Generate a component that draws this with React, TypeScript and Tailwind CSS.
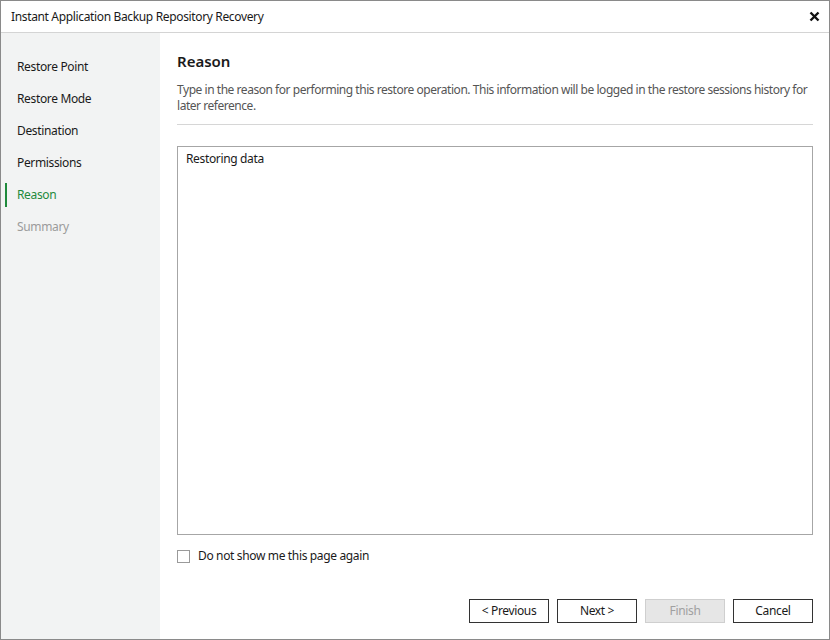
import { useState } from 'react'

const STEPS = ['Restore Point', 'Restore Mode', 'Destination', 'Permissions', 'Reason', 'Summary']

export default function App() {
  const [reason, setReason] = useState('Restoring data')
  const [hide, setHide] = useState(false)
  const active = 4

  return (
    <div className="w-[830px] h-[640px] bg-white border border-[#8a8a8a] flex flex-col text-[12px] tracking-[-0.35px] text-[#1a1a1a] overflow-hidden" style={{ fontFamily: '"Noto Sans", "Open Sans", sans-serif' }}>
      <div className="h-[32px] shrink-0 border-b border-[#d4d4d4] flex items-center justify-between pl-[10px] pr-[9px]">
        <span>Instant Application Backup Repository Recovery</span>
        <svg width="11" height="11" viewBox="0 0 11 11"><path d="M1.5 1.5l8 8M9.5 1.5l-8 8" stroke="#111" strokeWidth="2.4" /></svg>
      </div>

      <div className="flex flex-1 min-h-0">
        <div className="w-[159px] shrink-0 bg-[#f2f3f3] pt-[18px]">
          {STEPS.map((s, i) => (
            <div key={s} className="h-[32px] flex items-center relative">
              {i === active && <div className="absolute left-[4px] top-[4px] bottom-[4px] w-[2px] bg-[#1f8a3c]" />}
              <span className={`pl-[16px] ${i === active ? 'text-[#1f8a3c]' : i > active ? 'text-[#9b9b9b]' : 'text-[#1a1a1a]'}`}>{s}</span>
            </div>
          ))}
        </div>

        <div className="flex-1 flex flex-col pl-[17px] pr-[16px] pt-[17px] pb-[16px]">
          <h1 className="text-[15px] font-semibold leading-[22px] tracking-normal text-[#1a1a1a]">Reason</h1>
          <p className="mt-[10px] text-[#555] leading-[16px] tracking-[-0.46px]">Type in the reason for performing this restore operation. This information will be logged in the restore sessions history for later reference.</p>
          <div className="mt-[10px] h-px bg-[#d6d6d6]" />

          <textarea
            value={reason}
            onChange={(e) => setReason(e.target.value)}
            className="mt-[21px] h-[389px] resize-none border border-[#a6a6a6] px-[8px] py-[4px] leading-[16px] outline-none text-[#1a1a1a]"
          />

          <label className="mt-[12px] flex items-center gap-[8px] cursor-pointer">
            <input type="checkbox" checked={hide} onChange={(e) => setHide(e.target.checked)} className="w-[13px] h-[13px] m-0 appearance-none border border-[#9a9a9a] bg-white checked:bg-[#1f8a3c]" />
            <span>Do not show me this page again</span>
          </label>

          <div className="mt-auto flex justify-end gap-[8px]">
            <button className="w-[80px] h-[24px] border border-[#333] bg-white">&lt; Previous</button>
            <button className="w-[80px] h-[24px] border border-[#333] bg-white">Next &gt;</button>
            <button disabled className="w-[80px] h-[24px] border border-[#cfcfcf] bg-[#e6e6e6] text-[#a0a0a0]">Finish</button>
            <button className="w-[80px] h-[24px] border border-[#333] bg-white">Cancel</button>
          </div>
        </div>
      </div>
    </div>
  )
}
